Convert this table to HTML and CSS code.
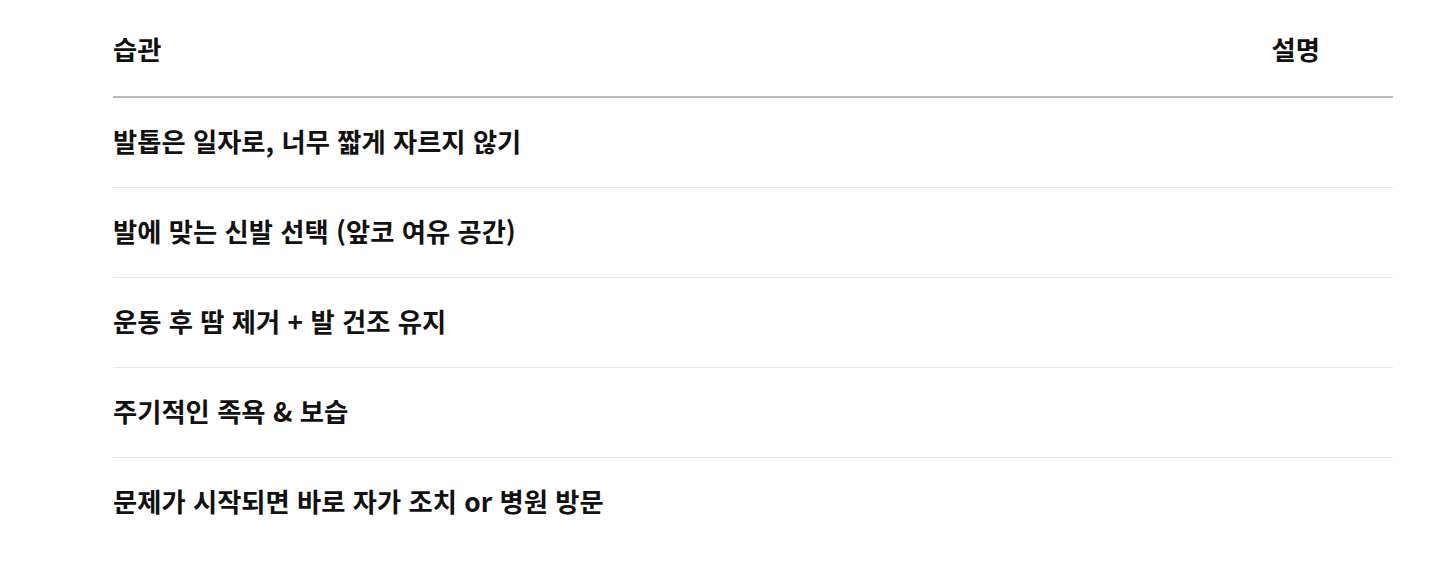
FILE: index.html
```html
<!DOCTYPE html>
<html lang="ko">
<head>
<meta charset="utf-8">
<link rel="stylesheet" href="styles.css">
</head>
<body>
<div class="wrap">
  <table class="habits">
    <thead>
      <tr><th class="col-habit">습관</th><th class="col-desc">설명</th></tr>
    </thead>
    <tbody>
      <tr><td>발톱은 일자로, 너무 짧게 자르지 않기</td><td></td></tr>
      <tr><td>발에 맞는 신발 선택 (앞코 여유 공간)</td><td></td></tr>
      <tr><td>운동 후 땀 제거 + 발 건조 유지</td><td></td></tr>
      <tr><td>주기적인 족욕 &amp; 보습</td><td></td></tr>
      <tr class="last"><td>문제가 시작되면 바로 자가 조치 or 병원 방문</td><td></td></tr>
    </tbody>
  </table>
</div>
</body>
</html>
```
FILE: styles.css
```css
html, body {
  margin: 0;
  padding: 0;
  background: #ffffff;
}
body {
  font-family: "Noto Sans CJK KR", "Noto Sans", sans-serif;
  color: #111111;
}
.wrap {
  padding: 1px 59px 0 113px;
}
.habits {
  width: 1280px;
  border-collapse: collapse;
}
.habits th {
  font-size: 26.3px;
  font-weight: 600;
  line-height: 41px;
  padding: 27px 0 27px;
  border-bottom: 2px solid #bbbbbb;
}
.col-habit { text-align: left; }
.col-desc { text-align: right; padding-right: 73px !important; }
.habits td {
  font-size: 26.3px;
  font-weight: 600;
  line-height: 41px;
  padding: 22px 0 26px;
  border-bottom: 1px solid #e5e5e5;
  text-align: left;
}
.habits tr.last td { border-bottom: none; }
```
